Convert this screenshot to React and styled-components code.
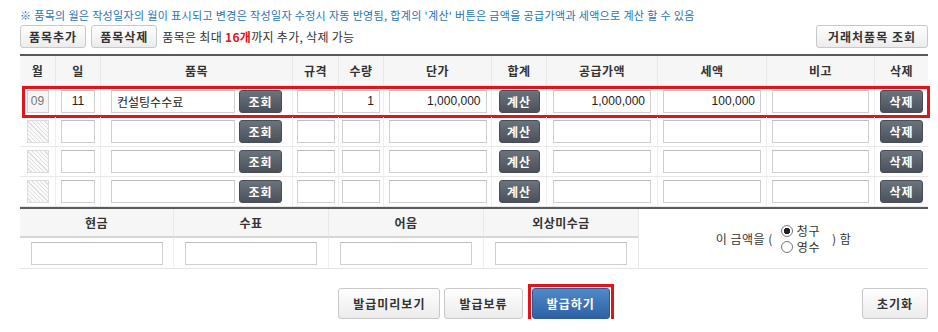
import React from 'react';
import styled, { createGlobalStyle, css } from 'styled-components';

const COLS = '35px 45px 192px 46px 45px 108px 55px 111px 109px 108px 54px';

const rows = [
  { month: '09', day: '11', item: '컨설팅수수료', qty: '1', price: '1,000,000', supply: '1,000,000', tax: '100,000' },
  {},
  {},
  {},
];

function App() {
  return (
    <>
      <GlobalStyle />
      <Page>
        <Note>
          ※ 품목의 월은 작성일자의 월이 표시되고 변경은 작성일자 수정시 자동 반영됨, 합계의 '계산' 버튼은 금액을 공급가액과
          세액으로 계산 할 수 있음
        </Note>
        <Toolbar>
          <GrayButton>품목추가</GrayButton>
          <GrayButton>품목삭제</GrayButton>
          <Hint>
            품목은 최대 <strong>16개</strong>까지 추가, 삭제 가능
          </Hint>
          <GrayButton $push>거래처품목 조회</GrayButton>
        </Toolbar>

        <ItemTable>
          <HeadRow>
            {['월', '일', '품목', '규격', '수량', '단가', '합계', '공급가액', '세액', '비고', '삭제'].map((h) => (
              <HeadCell key={h}>{h}</HeadCell>
            ))}
          </HeadRow>
          {rows.map((r, i) => (
            <ItemRow key={i} $highlight={i === 0}>
              <Cell>{r.month ? <Field $w={22} defaultValue={r.month} $muted /> : <Hatch />}</Cell>
              <Cell>
                <Field $w={34} defaultValue={r.day || ''} />
              </Cell>
              <Cell>
                <Field $w={124} $align="left" defaultValue={r.item || ''} />
                <DarkButton>조회</DarkButton>
              </Cell>
              <Cell>
                <Field $w={38} />
              </Cell>
              <Cell>
                <Field $w={38} $align="right" defaultValue={r.qty || ''} />
              </Cell>
              <Cell>
                <Field $w={98} $align="right" defaultValue={r.price || ''} />
              </Cell>
              <Cell>
                <DarkButton $w={41}>계산</DarkButton>
              </Cell>
              <Cell>
                <Field $w={98} $align="right" defaultValue={r.supply || ''} />
              </Cell>
              <Cell>
                <Field $w={98} $align="right" defaultValue={r.tax || ''} />
              </Cell>
              <Cell>
                <Field $w={97} />
              </Cell>
              <Cell>
                <DarkButton>삭제</DarkButton>
              </Cell>
            </ItemRow>
          ))}
        </ItemTable>

        <PayTable>
          {['현금', '수표', '어음', '외상미수금'].map((h) => (
            <PayHead key={h}>{h}</PayHead>
          ))}
          <ClaimCell>
            이 금액을 (
            <RadioGroup>
              <RadioLine>
                <Radio $checked />
                청구
              </RadioLine>
              <RadioLine>
                <Radio />
                영수
              </RadioLine>
            </RadioGroup>
            ) 함
          </ClaimCell>
          {[0, 1, 2, 3].map((k) => (
            <PayCell key={k}>
              <Field $w={132} />
            </PayCell>
          ))}
        </PayTable>

        <Actions>
          <Center>
            <ActionButton>발급미리보기</ActionButton>
            <ActionButton>발급보류</ActionButton>
            <Marked>
              <ActionButton $primary>발급하기</ActionButton>
            </Marked>
          </Center>
          <ActionButton $end>초기화</ActionButton>
        </Actions>
      </Page>
    </>
  );
}

export default App;

const GlobalStyle = createGlobalStyle`
  body {
    margin: 0;
    background: #fff;
    font-family: 'Noto Sans CJK KR', sans-serif;
    color: #333;
  }
`;

const Page = styled.div`
  width: 908px;
  padding: 8px 10px 0 20px;
`;

const Note = styled.p`
  margin: 0;
  font-size: 11px;
  line-height: 14px;
  color: #2673b6;
  letter-spacing: 0.35px;
  white-space: nowrap;
`;

const Toolbar = styled.div`
  display: flex;
  align-items: center;
  gap: 5px;
  margin-top: 3px;
  height: 23px;
`;

const Hint = styled.span`
  font-size: 12px;
  color: #333;
  letter-spacing: 0.3px;
  strong {
    color: #e0141c;
  }
`;

const GrayButton = styled.button`
  height: 23px;
  padding: 0 8px;
  border: 1px solid #c8c8c8;
  border-radius: 3px;
  background: linear-gradient(#ffffff, #ececec);
  font-family: 'Noto Sans CJK KR', sans-serif;
  font-size: 12px;
  font-weight: 700;
  letter-spacing: 1px;
  color: #333;
  white-space: nowrap;
  ${(p) => p.$push && 'margin-left: auto; padding: 0 11px;'}
`;

const ItemTable = styled.div`
  margin-top: 6px;
  border-top: 2px solid #5a5a5a;
`;

const HeadRow = styled.div`
  display: grid;
  grid-template-columns: ${COLS};
  height: 29px;
  background: #f6f6f6;
  border-bottom: 1px solid #e2e2e2;
`;

const HeadCell = styled.div`
  display: flex;
  align-items: center;
  justify-content: center;
  font-size: 12px;
  font-weight: 700;
  letter-spacing: 0.5px;
  color: #333;
  & + & {
    border-left: 1px solid #e8e8e8;
  }
`;

const ItemRow = styled.div`
  position: relative;
  display: grid;
  grid-template-columns: ${COLS};
  height: 29px;
  border-bottom: 1px solid #e8e8e8;
  ${(p) =>
    p.$highlight &&
    css`
      height: 30px;
      &::after {
        content: '';
        position: absolute;
        top: 0;
        left: 2px;
        right: -2px;
        bottom: -2px;
        border: 3px solid #e3121b;
        pointer-events: none;
      }
    `}
`;

const Cell = styled.div`
  display: flex;
  align-items: center;
  justify-content: center;
  gap: 4px;
  & + & {
    border-left: 1px solid #eeeeee;
  }
`;

const Field = styled.input`
  box-sizing: border-box;
  width: ${(p) => p.$w}px;
  height: 23px;
  padding: 0 ${(p) => (p.$align ? 5 : 1)}px;
  border: 1px solid #cfcfcf;
  border-top-color: #bdbdbd;
  background: ${(p) => (p.$muted ? '#f5f5f5' : '#fff')};
  color: ${(p) => (p.$muted ? '#777' : '#222')};
  font-family: 'Liberation Sans', 'Noto Sans CJK KR', sans-serif;
  font-size: 12px;
  text-align: ${(p) => p.$align || 'center'};
  outline: none;
`;

const Hatch = styled.span`
  box-sizing: border-box;
  width: 22px;
  height: 23px;
  border: 1px solid #dcdcdc;
  background: repeating-linear-gradient(45deg, #fafafa 0 2px, #dedede 2px 3px);
`;

const DarkButton = styled.button`
  width: ${(p) => p.$w || 43}px;
  height: 23px;
  padding: 0;
  border: 1px solid #474e57;
  border-radius: 3px;
  background: linear-gradient(#6b737d, #4a515b);
  color: #fff;
  font-family: 'Noto Sans CJK KR', sans-serif;
  font-size: 12px;
  font-weight: 700;
  letter-spacing: 1px;
`;

const PayTable = styled.div`
  display: grid;
  grid-template-columns: 153px 155px 155px 155px 290px;
  grid-template-rows: 29px 30px;
  border-top: 2px solid #5a5a5a;
  border-bottom: 1px solid #e4e4e4;
`;

const PayHead = styled.div`
  display: flex;
  align-items: center;
  justify-content: center;
  background: #f6f6f6;
  border-bottom: 2px solid #d6d6d6;
  font-size: 12px;
  font-weight: 700;
  letter-spacing: 0.5px;
  color: #333;
  & + & {
    border-left: 1px solid #e8e8e8;
  }
`;

const PayCell = styled.div`
  display: flex;
  align-items: center;
  justify-content: center;
  & + & {
    border-left: 1px solid #eeeeee;
  }
`;

const ClaimCell = styled.div`
  grid-column: 5;
  grid-row: 1 / span 2;
  display: flex;
  align-items: center;
  justify-content: center;
  gap: 4px;
  border-left: 1px solid #e8e8e8;
  font-size: 12px;
  letter-spacing: 0.5px;
  color: #333;
`;

const RadioGroup = styled.div`
  display: flex;
  flex-direction: column;
  padding: 0 8px 0 4px;
`;

const RadioLine = styled.label`
  display: flex;
  align-items: center;
  gap: 4px;
  height: 16px;
`;

const Radio = styled.span`
  box-sizing: border-box;
  width: 12px;
  height: 12px;
  border: 1px solid #777;
  border-radius: 50%;
  background: ${(p) => (p.$checked ? 'radial-gradient(circle, #222 0 3px, #fff 3.5px)' : '#fff')};
`;

const Actions = styled.div`
  display: grid;
  grid-template-columns: 1fr auto 1fr;
  align-items: center;
  margin-top: 19px;
  & > :last-child {
    justify-self: end;
  }
`;

const Center = styled.div`
  grid-column: 2;
  display: flex;
  align-items: center;
  gap: 4px;
`;

const Marked = styled.span`
  display: inline-flex;
  margin: -4px -4px -4px 1px;
  padding: 1px;
  border: 3px solid #e3121b;
`;

const ActionButton = styled.button`
  height: 31px;
  padding: 0 14px;
  border: 1px solid #c8c8c8;
  border-radius: 3px;
  background: linear-gradient(#ffffff, #ebebeb);
  font-family: 'Noto Sans CJK KR', sans-serif;
  font-size: 12px;
  font-weight: 700;
  letter-spacing: 1px;
  color: #333;
  white-space: nowrap;
  ${(p) => p.$end && 'grid-column: 3;'}
  ${(p) =>
    p.$primary &&
    css`
      border-color: #2c5b97;
      background: linear-gradient(#5189c9, #2d61a3);
      color: #fff;
    `}
`;
